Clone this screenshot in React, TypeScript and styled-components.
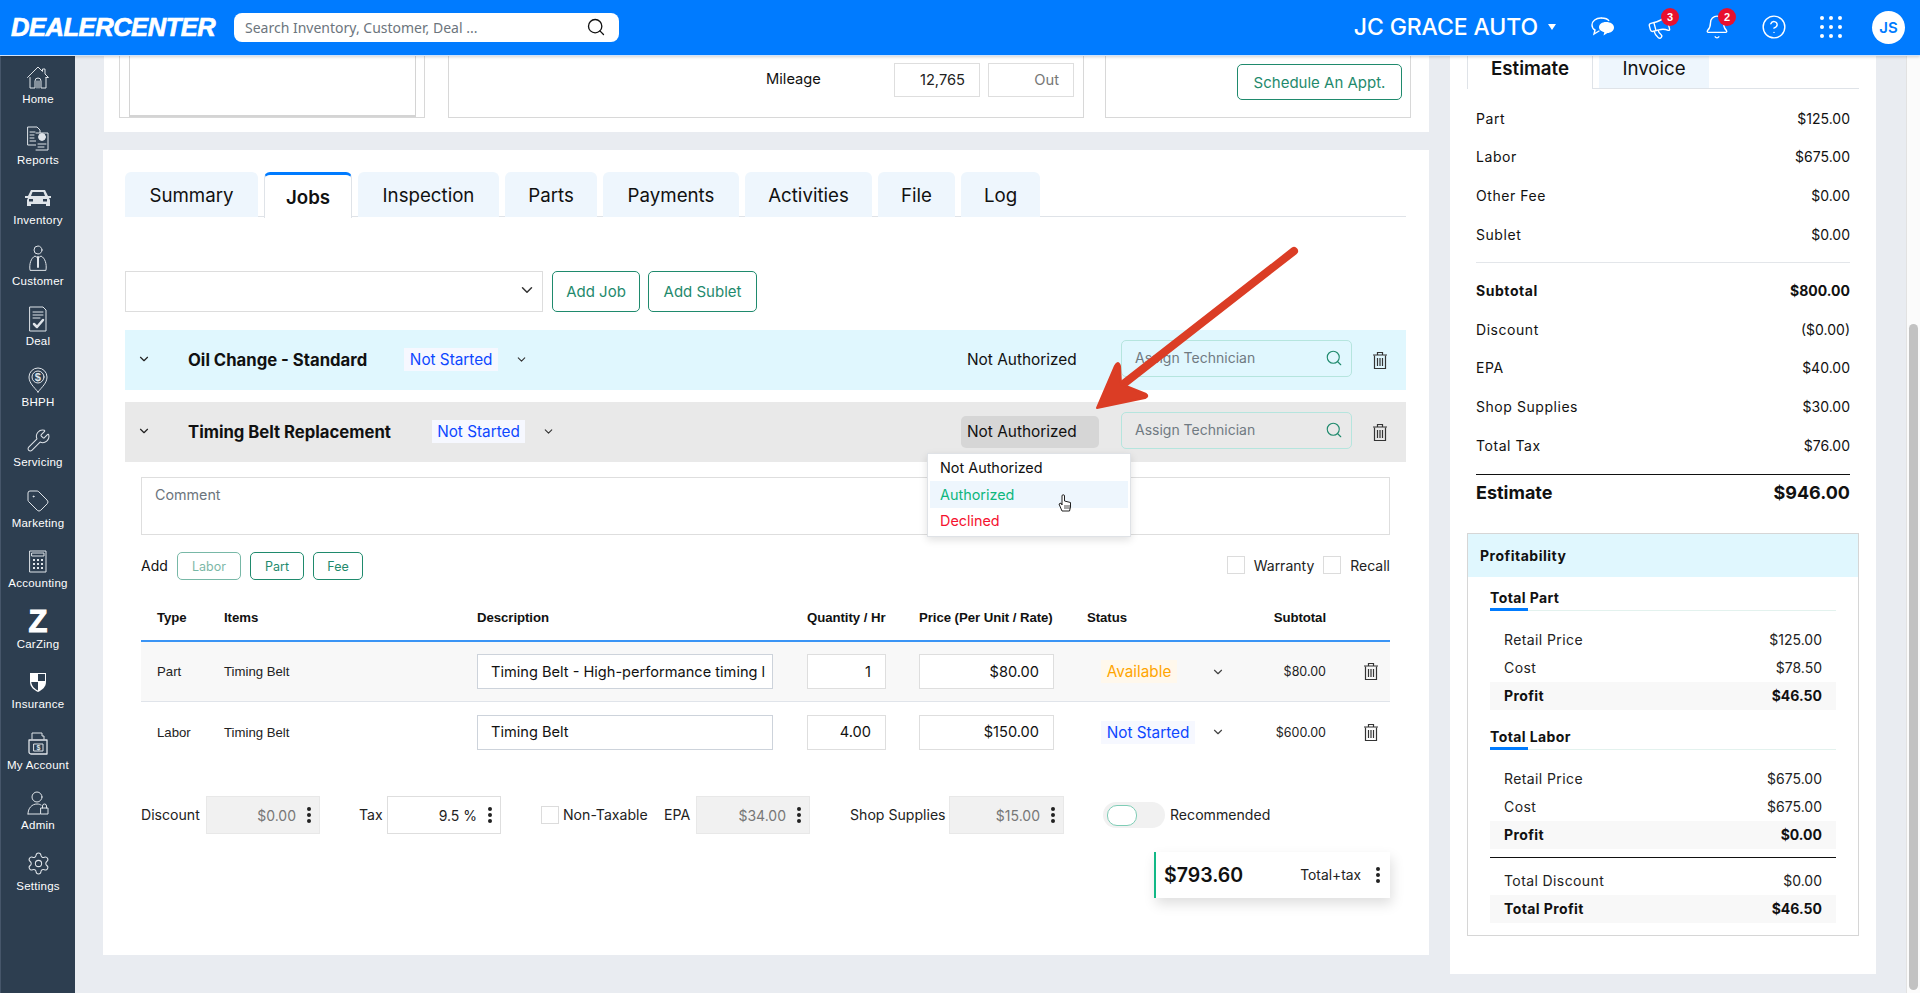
import React from 'react';
import styled, { createGlobalStyle } from 'styled-components';
import { Bell, ChevronDown, CircleHelp, Megaphone, Search, Settings, Wrench, Tag } from 'lucide-react';

const SANS = `Inter, "Liberation Sans", sans-serif`;
const ARIAL = `"Liberation Sans", Arial, sans-serif`;

const Global = createGlobalStyle`
  html, body { margin: 0; padding: 0; height: 100%; overflow: hidden; background: #e9ecf1; }
  * { box-sizing: border-box; }
  body { font-family: ${SANS}; color: #111; }
`;

const Page = styled.div`position: relative; width: 1920px; height: 993px; overflow: hidden; display: flex; flex-direction: column;`;
const Header = styled.header`
  height: 56px; flex: none; display: flex; align-items: center; background: #007bff; border-bottom: 1px solid #cfe3fb;
  padding: 0 15px 1px 11px; position: relative; z-index: 3; box-shadow: 0 1px 3px rgba(0,0,0,.18);
`;
const Logo = styled.div`
  width: 223px; color: #fff; font: italic 900 25.5px ${ARIAL}; letter-spacing: -0.45px; -webkit-text-stroke: .7px #fff; white-space: nowrap;
`;
const SearchBox = styled.div`
  width: 385px; height: 29px; background: #fff; border-radius: 8px; display: flex; align-items: center; justify-content: space-between;
  padding: 0 13px 0 11px; color: #6c757d; font: 14px "Noto Sans", sans-serif;
`;
const HeaderRight = styled.div`margin-left: auto; display: flex; align-items: center;`;
const Dealer = styled.div`color: #fff; font: 500 23px ${SANS}; letter-spacing: -.1px; margin-right: 10px; white-space: nowrap;`;
const Caret = styled.span`width: 0; height: 0; border: 4.5px solid transparent; border-top: 6px solid #fff; margin: 4px 18px 0 0;`;
const IconCell = styled.div`position: relative; width: 57px; height: 40px; display: flex; align-items: center; justify-content: center; color: #fff;`;
const Badge = styled.span`
  position: absolute; top: 1px; left: 30px; width: 18px; height: 18px; border-radius: 50%; background: #e8102e; color: #fff;
  font: 700 11px/18px ${ARIAL}; text-align: center;
`;
const Avatar = styled.div`
  width: 33px; height: 33px; border-radius: 50%; background: #fff; color: #007bff; font: 600 15px/33px ${SANS}; text-align: center; margin-left: 13px;
`;
const Body = styled.div`flex: 1; display: flex; min-height: 0;`;
const Sidebar = styled.nav`width: 75px; flex: none; background: #2d3e50; border-left: 1px solid #46566a; padding-top: 7px;`;
const NavItem = styled.div`
  height: 60.5px; display: flex; flex-direction: column; align-items: center; color: #fff; font: 11.5px/14px ${ARIAL}; letter-spacing: .25px; white-space: nowrap;
  svg { display: block; }
`;
const NavIcon = styled.div`height: 28px; display: flex; align-items: center; justify-content: center; margin-bottom: 1px; color: #dfe4e9;`;
const ZMark = styled.span`font: 900 31px/28px ${ARIAL}; color: #fff; -webkit-text-stroke: 1px #fff;`;
const Main = styled.main`flex: 1; display: flex; padding-left: 28px; gap: 21px; min-width: 0;`;
const LeftCol = styled.div`width: 1326px; flex: none; display: flex; flex-direction: column;`;
const TopCard = styled.section`
  height: 76px; margin: 0 0 18px 1px; background: #fff; display: flex; padding: 0 17px 0 15px; align-items: flex-start;
`;
const TopBox = styled.div<{ $w: number; $ml?: number }>`
  width: ${p => p.$w}px; margin-left: ${p => p.$ml ?? 0}px; height: 62px; border: 1px solid #d8d8d8; border-top: 0; display: flex; align-items: flex-start;
`;
const ImageFrame = styled.div`width: 287px; height: 61px; margin-left: 9px; border: 1px solid #d4d4d4; border-top: 0; border-bottom-width: 2px;`;
const MileageLabel = styled.span`font: 14.7px/46px ${SANS}; margin: 0 0 0 317px; width: 128px; color: #111;`;
const MiniInput = styled.div<{ $muted?: boolean; $w: number }>`
  width: ${p => p.$w}px; height: 34px; margin-top: 7px; margin-right: 8px; border: 1px solid #dedede; padding-right: 14px; display: flex; align-items: center; justify-content: flex-end;
  font: 14.7px ${SANS}; color: ${p => (p.$muted ? '#777' : '#222')};
`;
const OutlineButton = styled.button<{ $w: number; $h: number; $faded?: boolean; $fs?: number }>`
  width: ${p => p.$w}px; height: ${p => p.$h}px; flex: none; background: #fff; border: 1px solid #1f8a6d; border-radius: 5px; color: #1f8a6d; padding: 0;
  font: ${p => p.$fs ?? 15}px ${SANS}; opacity: ${p => (p.$faded ? 0.6 : 1)};
`;
const ScheduleButton = styled(OutlineButton)`margin: 8px 0 0 131px;`;
const Card = styled.section`height: 805px; background: #fff; padding: 22px 23px 0 22px;`;
const Tabs = styled.div`display: flex; gap: 6px; height: 45px; border-bottom: 1px solid #dfe3e8;`;
const TabItem = styled.div<{ $w: number; $active?: boolean }>`
  width: ${p => p.$w}px; height: ${p => (p.$active ? 46 : 45)}px; display: flex; align-items: center; justify-content: center; border-radius: 6px 6px 0 0; font: ${p => (p.$active ? 600 : 400)} 18.7px ${SANS};
  color: #111; background: ${p => (p.$active ? '#fff' : '#eef6fd')}; padding-top: 1px;
  ${p => p.$active && 'border: 1px solid #dfe3e8; border-top: 3px solid #007bff; border-bottom: 0; position: relative; z-index: 1;'}
`;
const ActionRow = styled.div`display: flex; margin-top: 54px; gap: 8px;`;
const SelectBox = styled.div`
  width: 418px; height: 41px; border: 1px solid #dddddd; display: flex; align-items: center; justify-content: flex-end; padding: 0 6px 4px 0; color: #333; margin-right: 1px;
`;
const JobBar = styled.div<{ $tone: string; $mt: number }>`
  height: 60px; margin-top: ${p => p.$mt}px; background: ${p => p.$tone}; display: flex; align-items: center; padding: 0 16px 0 12px;
`;
const JobChevron = styled.span`width: 51px; display: flex; color: #222; margin-top: -2px;`;
const JobTitle = styled.div`font: 700 16.7px ${SANS}; color: #111; white-space: nowrap; margin-top: -1px;`;
const StatusPill = styled.span<{ $c: string; $bg: string; $w: number }>`
  display: inline-flex; align-items: center; justify-content: center; width: ${p => p.$w}px; height: 23px; color: ${p => p.$c}; background: ${p => p.$bg}; font: 400 15.3px ${SANS}; white-space: nowrap;
`;
const JobPillSlot = styled.div<{ $ml: number }>`display: flex; align-items: center; margin-left: ${p => p.$ml}px; color: #333; gap: 17px; margin-top: -2px;`;
const JobRight = styled.div`margin-left: auto; display: flex; align-items: center;`;
const AuthBox = styled.div<{ $open?: boolean }>`
  width: 138px; height: 32px; border-radius: 5px; background: ${p => (p.$open ? '#d6d6d6' : 'transparent')}; font: 15.4px/32px ${SANS}; padding-left: 6px; color: #111; white-space: nowrap;
`;
const TechBox = styled.div`
  width: 231px; height: 37px; margin: 0 0 3px 22px; border: 1px solid #b5e5de; border-radius: 5px; display: flex; align-items: center; justify-content: space-between; padding: 0 8px 2px 13px; color: #707a82; font: 14px ${SANS};
`;
const TrashSlot = styled.span`width: 18px; margin-left: 20px; display: flex; color: #333;`;
const Detail = styled.div`padding: 0 16px;`;
const CommentBox = styled.div`height: 58px; margin-top: 15px; border: 1px solid #dedede; padding: 8px 13px; color: #6c757d; font: 14.3px ${SANS};`;
const AddRow = styled.div`display: flex; align-items: center; margin-top: 17px; height: 28px; font: 14px ${SANS};`;
const AddLabel = styled.span`width: 36px; margin-top: -2px;`;
const AddButtons = styled.div`display: flex; gap: 9px;`;
const Checks = styled.div`margin: -2px 0 0 auto; display: flex; align-items: center; font: 14px ${SANS}; color: #222;`;
const CheckBox = styled.span<{ $ml?: number; $mr?: number }>`
  width: 18px; height: 18px; flex: none; border: 1px solid #dcdcdc; margin-left: ${p => p.$ml ?? 0}px; margin-right: ${p => p.$mr ?? 9}px; background: #fff;
`;
const columns = '67px 253px 330px 112px 168px 153px 86px 1fr';
const HeadRow = styled.div`
  height: 62px; display: grid; grid-template-columns: ${columns}; padding: 29px 0 0 16px; border-bottom: 2px solid #3a94f5; font: 700 13.2px/18px ${ARIAL}; color: #111; white-space: nowrap; letter-spacing: -.05px;
`;
const RightHead = styled.div`text-align: right;`;
const LineRow = styled.div<{ $shade?: boolean }>`
  height: 60px; display: grid; grid-template-columns: ${columns}; padding-left: 16px; align-items: center; font: 13.2px ${ARIAL}; color: #222;
  background: ${p => (p.$shade ? '#f8f8f8' : '#fff')}; ${p => p.$shade && 'border-bottom: 1px solid #e0e4ea;'}
`;
const FieldBox = styled.div<{ $w: number; $right?: boolean; $strong?: boolean }>`
  width: ${p => p.$w}px; height: 35px; background: #fff; border: 1px solid ${p => (p.$strong ? '#cdd3db' : '#dedede')}; display: flex; align-items: center; padding: 0 14px 0 13px;
  font: 14.6px ${SANS}; color: #111; white-space: nowrap; overflow: hidden; justify-content: ${p => (p.$right ? 'flex-end' : 'flex-start')};
`;
const StatusCell = styled.div`display: flex; align-items: center; padding-left: 14px; color: #444;`;
const StatusSlot = styled.div`width: 110px;`;
const AmountCell = styled.div`text-align: right; font: 12.5px ${SANS}; color: #222;`;
const TrashCell = styled.div`display: flex; justify-content: flex-end; padding-right: 11px; color: #333;`;
const Footer = styled.div`margin-top: 34px; height: 38px; display: flex; align-items: center; font: 14.1px ${SANS}; color: #222; white-space: nowrap;`;
const FooterLabel = styled.span<{ $w: number; $ml?: number }>`width: ${p => p.$w}px; margin-left: ${p => p.$ml ?? 0}px; flex: none; margin-top: -1px;`;
const Amount = styled.div<{ $grey?: boolean; $w: number }>`
  width: ${p => p.$w}px; height: 38px; flex: none; display: flex; align-items: center; justify-content: flex-end; padding-right: 8px; gap: 11px; font: 14px ${SANS};
  background: ${p => (p.$grey ? '#f1f1f1' : '#fff')}; border: 1px solid ${p => (p.$grey ? '#e8e8e8' : '#dedede')}; color: ${p => (p.$grey ? '#777' : '#222')};
`;
const Kebab = styled.span`display: flex; flex-direction: column; gap: 2px; width: 4px; i { width: 4px; height: 4px; background: #222; border-radius: 50%; }`;
const Toggle = styled.span`width: 62px; height: 26px; margin-left: 39px; flex: none; background: #f1f1f1; border-radius: 13px; display: flex; align-items: center; padding-left: 4px; margin-right: 5px;`;
const Knob = styled.span`width: 30px; height: 21px; background: #fff; border: 1px solid #7fcdb6; border-radius: 10px;`;
const TotalWrap = styled.div`display: flex; justify-content: flex-end; margin-top: 18px;`;
const TotalCard = styled.div`
  width: 236px; height: 46px; background: #fff; border-left: 2px solid #12b886; box-shadow: 2px 6px 12px rgba(0,0,0,.13); display: flex; align-items: center; padding: 0 10px 0 8px;
`;
const TotalValue = styled.span`font: 600 19.5px ${SANS}; color: #111;`;
const TotalLabel = styled.span`margin-left: auto; margin-right: 15px; font: 13.8px ${SANS}; color: #222;`;
const RightCol = styled.aside`width: 426px; height: 918px; background: #fff; flex: none; padding: 0 17px 0 17px;`;
const SideTabs = styled.div`display: flex; height: 33px; border-bottom: 1px solid #dfe3e8; gap: 6px;`;
const SideTab = styled.div<{ $w: number; $active?: boolean }>`
  width: ${p => p.$w}px; height: ${p => (p.$active ? 33 : 32)}px; display: flex; align-items: center; justify-content: center; font: ${p => (p.$active ? 600 : 400)} 18.7px ${SANS}; color: #111; padding-bottom: 8px;
  background: ${p => (p.$active ? '#fff' : '#eef6fd')}; ${p => p.$active && 'border-left: 1px solid #dfe3e8; border-right: 1px solid #dfe3e8; position: relative; z-index: 1;'}
`;
const Summary = styled.div`padding: 10px 9px 0 9px; margin-bottom: 0;`;
const SumRow = styled.div<{ $bold?: boolean }>`
  height: 38.6px; display: flex; align-items: center; justify-content: space-between; font: ${p => (p.$bold ? 700 : 400)} 14px ${SANS}; color: #111;
  span:first-child { letter-spacing: .55px; }
`;
const SumRule = styled.div`height: 1px; background: #e3e6ea; margin: 9px 0 8px;`;
const BlackRule = styled.div`height: 1px; background: #111; margin-top: 10px;`;
const EstimateRow = styled.div`height: 34px; display: flex; align-items: center; justify-content: space-between; font: 700 18px ${SANS}; color: #111;`;
const ProfitBox = styled.div`margin-top: 24px; height: 403px; border: 1px solid #d6d6d6;`;
const ProfitHead = styled.div`height: 43px; background: #e0f7fe; padding-left: 12px; display: flex; align-items: center; font: 700 14px ${SANS}; color: #111; letter-spacing: .5px;`;
const ProfitBody = styled.div`padding: 0 22px;`;
const GroupTitle = styled.div<{ $mt: number }>`
  position: relative; margin-top: ${p => p.$mt}px; height: 34px; border-bottom: 1px solid #e3f2ee; padding-top: 12px; font: 700 14px/18px ${SANS}; color: #111; letter-spacing: .4px;
  &::after { content: ''; position: absolute; left: 0; bottom: -1px; width: 38px; height: 3px; background: #007bff; }
`;
const ProfitRows = styled.div`margin-top: 15px;`;
const ProfitRow = styled.div<{ $bold?: boolean }>`
  height: 28px; display: flex; align-items: center; justify-content: space-between; padding: 0 14px 2px; font: ${p => (p.$bold ? 700 : 400)} 14px ${SANS}; color: ${p => (p.$bold ? '#111' : '#222')};
  background: ${p => (p.$bold ? '#f8f8f8' : 'transparent')};
  span:first-child { letter-spacing: .4px; }
`;
const ProfitRule = styled.div`height: 1px; background: #111; margin: 8px 0 9px;`;
const Scroll = styled.div`margin-left: auto; width: 14px; flex: none; background: #fbfbfb; border-left: 1px solid #e2e2e2; padding: 268px 2px 3px 2px;`;
const Thumb = styled.div`height: 100%; background: #c2c2c2; border-radius: 5px;`;
const Menu = styled.div`
  position: absolute; left: 927px; top: 453px; width: 204px; height: 84px; background: #fff; border: 1px solid #dfe2e6; box-shadow: 0 3px 8px rgba(0,0,0,.12); padding: 0 2px; z-index: 5; font: 14.4px ${SANS};
`;
const MenuItem = styled.div<{ $c: string; $hover?: boolean; $h: number }>`
  height: ${p => p.$h}px; display: flex; align-items: center; padding-left: 10px; color: ${p => p.$c}; background: ${p => (p.$hover ? '#eef6fd' : 'transparent')};
`;
const Overlay = styled.svg`position: absolute; left: 0; top: 0; z-index: 6; pointer-events: none;`;
const CursorMark = styled.svg`position: absolute; left: 1058px; top: 494px; z-index: 7;`;

const S = { fill: 'none', stroke: 'currentColor', strokeWidth: 1, strokeLinecap: 'round' as const, strokeLinejoin: 'round' as const };

const HomeIcon = () => <svg width="24" height="24" viewBox="0 0 24 24" {...S}><path d="M1.500 12.500 12 2l4.500 4.500V4h2.500v5l3.500 3.500H20" /><path d="M4 12.500V23h5v-7a3 3 0 0 1 6 0v7h5V12.500" /><path d="M11 23v-7M13 23v-7" /></svg>;
const ReportsIcon = () => <svg width="22" height="26" viewBox="0 0 22 26" {...S}><path d="M1 2h9l3 3v15H1z" /><path d="M3 7h5M3 10h4M3 13h4M3 16h6" /><path d="M9 8h12v17H9" fill="#2d3e50" /><circle cx="15" cy="12" r="3.4" fill="currentColor" /><path d="M11 19h8M11 22h6" /></svg>;
const CarIcon = () => <svg width="26" height="20" viewBox="0 0 26 20"><path fill="currentColor" d="M6 2h14l3 6h3v2h-2l1 2v6h-4v-2H6v2H2v-6l1-2H0V8h3zm1.500 2L6 8h14l-1.500-4zM4 11v2.500h4V11zm14 0v2.500h4V11z" fillRule="evenodd" /></svg>;
const CustomerIcon = () => <svg width="20" height="27" viewBox="0 0 20 27" {...S}><circle cx="10" cy="5" r="4" /><path d="M2 25c-1-6 1-12 5-14l3 2 3-2c4 2 6 8 5 14z" /><path d="M10 12v10" strokeWidth="2" /></svg>;
const DealIcon = () => <svg width="20" height="28" viewBox="0 0 20 28" {...S}><path d="M2 2h13l3 3v21H2z" /><path d="M5 7h10M5 10h10M5 13h7" /><path d="m6 19 3 3 6-7" strokeWidth="2.500" /></svg>;
const BhphIcon = () => <svg width="20" height="26" viewBox="0 0 20 26" {...S}><path d="M10 25C6 20 1 16 1 10a9 9 0 0 1 18 0c0 6-5 10-9 15z" /><circle cx="10" cy="10" r="6" /><text x="10" y="14" textAnchor="middle" fontSize="11" fontWeight="700" fill="currentColor" stroke="none" fontFamily="Liberation Sans">$</text></svg>;
const CalcIcon = () => <svg width="18" height="23" viewBox="0 0 18 23" {...S}><rect x="1" y="1" width="16" height="21" /><rect x="3" y="3" width="12" height="3" /><path d="M4 10h2M8 10h2M12 10h2M4 14h2M8 14h2M12 14h2M4 18h2M8 18h2M12 18h2" strokeWidth="2" strokeLinecap="butt" /></svg>;
const ShieldIcon = () => <svg width="18" height="22" viewBox="0 0 18 22"><path fill="#fff" d="M1 2h16v9c0 5-4 8-8 10-4-2-8-5-8-10z" /><path fill="#2d3e50" d="M9 3h7v7H9zM2.200 11H9v8.500c-3-1.500-6.200-4-6.800-8.500z" /></svg>;
const AccountIcon = () => <svg width="22" height="24" viewBox="0 0 22 24" {...S}><path d="M5 8V2h10v3h2v3" /><path d="M2 9h18v14H4a2 2 0 0 1-2-2z" strokeWidth="1.300" /><path d="M7 13h9v7H7z" /><text x="11.500" y="19" textAnchor="middle" fontSize="7" fontWeight="700" fill="currentColor" stroke="none" fontFamily="Liberation Sans">$</text></svg>;
const AdminIcon = () => <svg width="24" height="24" viewBox="0 0 24 24" {...S}><circle cx="11" cy="6" r="5" /><path d="M2 23c0-6 4-10 9-10 2 0 3 .5 4 1M2 23h12" /><rect x="15" y="17" width="7" height="6" /><path d="M16.500 17v-2a2 2 0 0 1 4 0v2" /></svg>;
const ChatIcon = () => <svg width="24" height="22" viewBox="0 0 24 22"><path d="M10 2C5 2 1 5 1 9c0 2 1 4 3 5l-1 4 5-3" fill="none" stroke="#fff" strokeWidth="1.400" strokeLinecap="round" /><path d="M10 2c4 0 7 1 8 3" fill="none" stroke="#fff" strokeWidth="1.400" /><path fill="#fff" d="M15 6c4.500 0 8 2.200 8 5.500S19.500 17 16.500 17l-4 2.500.8-3.200C10.500 15.500 8 14 8 11.500 8 8.200 11 6 15 6z" /></svg>;
const GridIcon = () => <svg width="22" height="22" viewBox="0 0 22 22" fill="#fff">{[2, 11, 20].flatMap(x => [2, 11, 20].map(y => <circle key={`${x}${y}`} cx={x} cy={y} r="2" />))}</svg>;
const TrashIcon = () => <svg width="16" height="19" viewBox="0 0 16 19" fill="none" stroke="currentColor" strokeWidth="1.200"><path d="M1 4h14M5.500 4V1.500h5V4" /><path d="M2.500 4.500v13h11v-13" /><path d="M5.500 7v8M8 7v8M10.500 7v8" /></svg>;
const Dots = () => <Kebab><i /><i /><i /></Kebab>;

const navItems: [string, React.ReactNode][] = [
  ['Home', <HomeIcon />], ['Reports', <ReportsIcon />], ['Inventory', <CarIcon />], ['Customer', <CustomerIcon />], ['Deal', <DealIcon />],
  ['BHPH', <BhphIcon />], ['Servicing', <Wrench size={25} strokeWidth={1} />], ['Marketing', <Tag size={24} strokeWidth={1} />], ['Accounting', <CalcIcon />],
  ['CarZing', <ZMark>Z</ZMark>], ['Insurance', <ShieldIcon />], ['My Account', <AccountIcon />], ['Admin', <AdminIcon />], ['Settings', <Settings size={25} strokeWidth={1} />],
];
const tabs: [string, number][] = [['Summary', 133], ['Jobs', 88], ['Inspection', 141], ['Parts', 92], ['Payments', 136], ['Activities', 127], ['File', 77], ['Log', 79]];
const blue = { $c: '#0d47ff', $bg: '#f6f8ff' };

export default function App() {
  return (
    <Page>
      <Global />
      <Header>
        <Logo>DEALERCENTER</Logo>
        <SearchBox>Search Inventory, Customer, Deal ...<Search size={20} color="#111" strokeWidth={1.6} /></SearchBox>
        <HeaderRight>
          <Dealer>JC GRACE AUTO</Dealer><Caret />
          <IconCell><ChatIcon /></IconCell>
          <IconCell><Megaphone size={25} strokeWidth={1.3} style={{ transform: 'rotate(-15deg)' }} /><Badge>3</Badge></IconCell>
          <IconCell><Bell size={26} strokeWidth={1.3} /><Badge>2</Badge></IconCell>
          <IconCell><CircleHelp size={26} strokeWidth={1.3} /></IconCell>
          <IconCell><GridIcon /></IconCell>
          <Avatar>JS</Avatar>
        </HeaderRight>
      </Header>
      <Body>
        <Sidebar>{navItems.map(([label, icon]) => <NavItem key={label}><NavIcon>{icon}</NavIcon>{label}</NavItem>)}</Sidebar>
        <Main>
          <LeftCol>
            <TopCard>
              <TopBox $w={306}><ImageFrame /></TopBox>
              <TopBox $w={636} $ml={23}>
                <MileageLabel>Mileage</MileageLabel>
                <MiniInput $w={86}>12,765</MiniInput>
                <MiniInput $w={86} $muted>Out</MiniInput>
              </TopBox>
              <TopBox $w={306} $ml={21}><ScheduleButton $w={165} $h={36}>Schedule An Appt.</ScheduleButton></TopBox>
            </TopCard>
            <Card>
              <Tabs>{tabs.map(([t, w]) => <TabItem key={t} $w={w} $active={t === 'Jobs'}>{t}</TabItem>)}</Tabs>
              <ActionRow>
                <SelectBox><ChevronDown size={18} /></SelectBox>
                <OutlineButton $w={88} $h={41}>Add Job</OutlineButton>
                <OutlineButton $w={109} $h={41}>Add Sublet</OutlineButton>
              </ActionRow>
              <JobBar $tone="#e0f7fe" $mt={18}>
                <JobChevron><ChevronDown size={14} /></JobChevron>
                <JobTitle>Oil Change - Standard</JobTitle>
                <JobPillSlot $ml={37}><StatusPill {...blue} $w={94}>Not Started</StatusPill><ChevronDown size={13} /></JobPillSlot>
                <JobRight>
                  <AuthBox>Not Authorized</AuthBox>
                  <TechBox>Assign Technician<Search size={18} color="#1f8a6d" strokeWidth={1.5} /></TechBox>
                  <TrashSlot><TrashIcon /></TrashSlot>
                </JobRight>
              </JobBar>
              <JobBar $tone="#e9e9e9" $mt={12}>
                <JobChevron><ChevronDown size={14} /></JobChevron>
                <JobTitle>Timing Belt Replacement</JobTitle>
                <JobPillSlot $ml={41}><StatusPill {...blue} $w={93}>Not Started</StatusPill><ChevronDown size={13} /></JobPillSlot>
                <JobRight>
                  <AuthBox $open>Not Authorized</AuthBox>
                  <TechBox>Assign Technician<Search size={18} color="#1f8a6d" strokeWidth={1.5} /></TechBox>
                  <TrashSlot><TrashIcon /></TrashSlot>
                </JobRight>
              </JobBar>
              <Detail>
                <CommentBox>Comment</CommentBox>
                <AddRow>
                  <AddLabel>Add</AddLabel>
                  <AddButtons>
                    <OutlineButton $w={64} $h={28} $fs={12.5} $faded>Labor</OutlineButton>
                    <OutlineButton $w={54} $h={28} $fs={12.5}>Part</OutlineButton>
                    <OutlineButton $w={50} $h={28} $fs={12.5}>Fee</OutlineButton>
                  </AddButtons>
                  <Checks><CheckBox />Warranty<CheckBox $ml={9} />Recall</Checks>
                </AddRow>
                <HeadRow>
                  <div>Type</div><div>Items</div><div>Description</div><div>Quantity / Hr</div><div>Price (Per Unit / Rate)</div><div>Status</div><RightHead>Subtotal</RightHead><div />
                </HeadRow>
                <LineRow $shade>
                  <div>Part</div><div>Timing Belt</div>
                  <FieldBox $w={296} $strong>Timing Belt - High-performance timing l</FieldBox>
                  <FieldBox $w={79} $right>1</FieldBox>
                  <FieldBox $w={135} $right>$80.00</FieldBox>
                  <StatusCell><StatusSlot><StatusPill $c="#ffa500" $bg="#fff8ec" $w={76}>Available</StatusPill></StatusSlot><ChevronDown size={14} /></StatusCell>
                  <AmountCell>$80.00</AmountCell>
                  <TrashCell><TrashIcon /></TrashCell>
                </LineRow>
                <LineRow>
                  <div>Labor</div><div>Timing Belt</div>
                  <FieldBox $w={296} $strong>Timing Belt</FieldBox>
                  <FieldBox $w={79} $right>4.00</FieldBox>
                  <FieldBox $w={135} $right>$150.00</FieldBox>
                  <StatusCell><StatusSlot><StatusPill {...blue} $w={94}>Not Started</StatusPill></StatusSlot><ChevronDown size={14} /></StatusCell>
                  <AmountCell>$600.00</AmountCell>
                  <TrashCell><TrashIcon /></TrashCell>
                </LineRow>
                <Footer>
                  <FooterLabel $w={65}>Discount</FooterLabel>
                  <Amount $grey $w={114}>$0.00<Dots /></Amount>
                  <FooterLabel $w={28} $ml={39}>Tax</FooterLabel>
                  <Amount $w={114}>9.5 %<Dots /></Amount>
                  <FooterLabel $w={0} $ml={40}><CheckBox style={{ display: 'block' }} /></FooterLabel>
                  <FooterLabel $w={101} $ml={22}>Non-Taxable</FooterLabel>
                  <FooterLabel $w={32}>EPA</FooterLabel>
                  <Amount $grey $w={114}>$34.00<Dots /></Amount>
                  <FooterLabel $w={99} $ml={40}>Shop Supplies</FooterLabel>
                  <Amount $grey $w={115}>$15.00<Dots /></Amount>
                  <Toggle><Knob /></Toggle>
                  <FooterLabel $w={110}>Recommended</FooterLabel>
                </Footer>
                <TotalWrap>
                  <TotalCard><TotalValue>$793.60</TotalValue><TotalLabel>Total+tax</TotalLabel><Dots /></TotalCard>
                </TotalWrap>
              </Detail>
            </Card>
          </LeftCol>
          <RightCol>
            <SideTabs>
              <SideTab $w={126} $active>Estimate</SideTab>
              <SideTab $w={110}>Invoice</SideTab>
            </SideTabs>
            <Summary>
              <SumRow><span>Part</span><span>$125.00</span></SumRow>
              <SumRow><span>Labor</span><span>$675.00</span></SumRow>
              <SumRow><span>Other Fee</span><span>$0.00</span></SumRow>
              <SumRow><span>Sublet</span><span>$0.00</span></SumRow>
              <SumRule />
              <SumRow $bold><span>Subtotal</span><span>$800.00</span></SumRow>
              <SumRow><span>Discount</span><span>($0.00)</span></SumRow>
              <SumRow><span>EPA</span><span>$40.00</span></SumRow>
              <SumRow><span>Shop Supplies</span><span>$30.00</span></SumRow>
              <SumRow><span>Total Tax</span><span>$76.00</span></SumRow>
              <BlackRule />
              <EstimateRow><span>Estimate</span><span>$946.00</span></EstimateRow>
            </Summary>
            <ProfitBox>
              <ProfitHead>Profitability</ProfitHead>
              <ProfitBody>
                <GroupTitle $mt={0}>Total Part</GroupTitle>
                <ProfitRows>
                  <ProfitRow><span>Retail Price</span><span>$125.00</span></ProfitRow>
                  <ProfitRow><span>Cost</span><span>$78.50</span></ProfitRow>
                  <ProfitRow $bold><span>Profit</span><span>$46.50</span></ProfitRow>
                </ProfitRows>
                <GroupTitle $mt={6}>Total Labor</GroupTitle>
                <ProfitRows>
                  <ProfitRow><span>Retail Price</span><span>$675.00</span></ProfitRow>
                  <ProfitRow><span>Cost</span><span>$675.00</span></ProfitRow>
                  <ProfitRow $bold><span>Profit</span><span>$0.00</span></ProfitRow>
                </ProfitRows>
                <ProfitRule />
                <ProfitRow><span>Total Discount</span><span>$0.00</span></ProfitRow>
                <ProfitRow $bold><span>Total Profit</span><span>$46.50</span></ProfitRow>
              </ProfitBody>
            </ProfitBox>
          </RightCol>
          <Scroll><Thumb /></Scroll>
        </Main>
      </Body>
      <Menu>
        <MenuItem $c="#111" $h={27}>Not Authorized</MenuItem>
        <MenuItem $c="#0fb77e" $h={27} $hover>Authorized</MenuItem>
        <MenuItem $c="#f5122f" $h={25}>Declined</MenuItem>
      </Menu>
      <Overlay width="1920" height="993" viewBox="0 0 1920 993">
        <path d="M1294 251 1108 396" stroke="#db3d25" strokeWidth="8" strokeLinecap="round" fill="none" />
        <path d="M1097 408 1115 366q3-6 5 0l1 18 25 10q3 2-1 4z" fill="#db3d25" stroke="#db3d25" strokeWidth="2" strokeLinejoin="round" />
      </Overlay>
      <CursorMark width="15" height="18" viewBox="0 0 15 18">
        <path d="M4 17 1 10l2-1 1 2V2a1 1 0 0 1 2.500 0v5l6 1.500V13l-1 4z" fill="#fff" stroke="#222" strokeWidth="1" strokeLinejoin="round" />
        <path d="M7 11v4M9 11v4M11 11v4" stroke="#222" strokeWidth=".8" />
      </CursorMark>
    </Page>
  );
}
